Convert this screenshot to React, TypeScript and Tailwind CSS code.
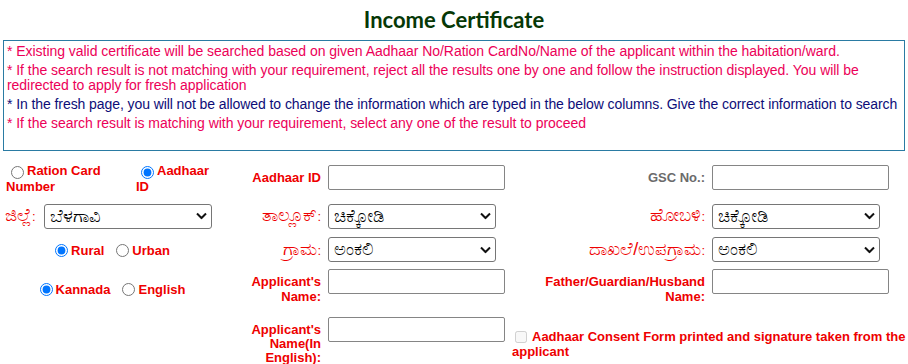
import React from 'react';

const Chevron = () => (
  <svg className="absolute right-[5px] top-1/2 -translate-y-1/2 pointer-events-none" width="11" height="7" viewBox="0 0 11 7" fill="none">
    <path d="M1 1L5.5 5.5L10 1" stroke="#111" strokeWidth="2" />
  </svg>
);

const Select = ({ value }: { value: string }) => (
  <div className="relative w-[168px] h-[25px]">
    <select className="appearance-none w-full h-full border border-[#767676] rounded-[3px] bg-white pl-[5px] text-[18px] leading-[23px] text-black" defaultValue={value}>
      <option value={value}>{value}</option>
    </select>
    <Chevron />
  </div>
);

const TextBox = ({ className = '' }: { className?: string }) => (
  <input type="text" className={`w-[177px] h-[25px] border border-[#858585] rounded-[2px] bg-white ${className}`} />
);

const labelB = 'w-[82px] shrink-0 text-right text-[#ee0000] font-bold text-[13px] leading-[15px] pr-[1px]';
const labelD = 'w-[198px] shrink-0 text-right text-[#ee0000] font-bold text-[13px] leading-[15px] pl-[15px] pr-[3px]';
const knLabel = 'text-[18px] leading-[22px] text-[#ee0000]';

export default function App() {
  return (
    <div className="w-[908px] h-[364px] overflow-hidden bg-white font-['Liberation_Sans',Arial,'Noto_Sans',sans-serif]">
      <div className="h-[40px] flex items-center justify-center">
        <h1 className="font-['Lato',sans-serif] font-bold text-[22px] leading-[26px] text-[#063806]">Income Certificate</h1>
      </div>

      {/* instructions */}
      <div className="mx-[3px] w-[902px] h-[111px] border border-[#2a7ba3] pl-[3px] pt-[3px] text-[14px] tracking-[-0.04px] leading-[15px] flex flex-col gap-[4px]">
        <p className="text-[#ec0058]">* Existing valid certificate will be searched based on given Aadhaar No/Ration CardNo/Name of the applicant within the habitation/ward.</p>
        <p className="text-[#ec0058]">* If the search result is not matching with your requirement, reject all the results one by one and follow the instruction displayed. You will be redirected to apply for fresh application</p>
        <p className="text-[#0d0d78] tracking-[-0.08px]">* In the fresh page, you will not be allowed to change the information which are typed in the below columns. Give the correct information to search</p>
        <p className="text-[#ec0058]">* If the search result is matching with your requirement, select any one of the result to proceed</p>
      </div>

      <div className="pt-[7px] text-[13px] leading-[15px]">
        {/* row 1 */}
        <div className="h-[38px] flex items-center">
          <div className="w-[240px] shrink-0 flex text-[#ee0000] font-bold mt-[3px]">
            <label className="w-[130px] ml-[6px]">
              <input type="radio" name="search" className="ml-[5px] mr-[3px] align-[-4px]" />Ration Card Number
            </label>
            <label className="w-[80px]">
              <input type="radio" name="search" defaultChecked className="ml-[5px] mr-[3px] align-[-4px] accent-[#0075ff]" />Aadhaar ID
            </label>
          </div>
          <div className={labelB}>Aadhaar ID</div>
          <div className="w-[188px] shrink-0 pl-[6px]"><TextBox /></div>
          <div className={`${labelD} !text-[#6b6b6b]`}>GSC No.:</div>
          <div className="pl-[4px]"><TextBox /></div>
        </div>

        {/* row 2 */}
        <div className="h-[40px] flex items-center">
          <div className="w-[240px] shrink-0 flex items-center">
            <span className={`w-[44px] shrink-0 pl-[5px] whitespace-nowrap ${knLabel}`}>ಜಿಲ್ಲೆ<span className="text-[13px]">:</span></span>
            <Select value="ಬೆಳಗಾವಿ" />
          </div>
          <div className={`w-[82px] shrink-0 text-right pr-[1px] whitespace-nowrap ${knLabel}`}>ತಾಲ್ಲೂಕ್<span className="text-[13px]">:</span></div>
          <div className="w-[188px] shrink-0 pl-[6px]"><Select value="ಚಿಕ್ಕೋಡಿ" /></div>
          <div className={`w-[198px] shrink-0 text-right pr-[3px] ${knLabel}`}>ಹೋಬಳಿ<span className="text-[13px]">:</span></div>
          <div className="pl-[4px]"><Select value="ಚಿಕ್ಕೋಡಿ" /></div>
        </div>

        {/* row 3 */}
        <div className="h-[27px] flex items-center">
          <div className="w-[220px] shrink-0 mr-[20px] mt-[2px] flex justify-center gap-[7px] text-[#ee0000] font-bold">
            <label className="flex items-center">
              <input type="radio" name="area" defaultChecked className="ml-[5px] mr-[3px] accent-[#0075ff]" />Rural
            </label>
            <label className="flex items-center">
              <input type="radio" name="area" className="ml-[5px] mr-[3px]" />Urban
            </label>
          </div>
          <div className={`w-[82px] shrink-0 text-right pr-[1px] ${knLabel}`}>ಗ್ರಾಮ<span className="text-[13px]">:</span></div>
          <div className="w-[188px] shrink-0 pl-[6px]"><Select value="ಅಂಕಲಿ" /></div>
          <div className={`w-[198px] shrink-0 text-right pr-[3px] ${knLabel}`}>ದಾಖಲೆ/ಉಪಗ್ರಾಮ<span className="text-[13px]">:</span></div>
          <div className="pl-[4px]"><Select value="ಅಂಕಲಿ" /></div>
        </div>

        {/* row 4 */}
        <div className="h-[52px] flex items-center">
          <div className="w-[220px] shrink-0 mr-[20px] flex justify-center gap-[7px] text-[#ee0000] font-bold">
            <label className="flex items-center">
              <input type="radio" name="lang" defaultChecked className="ml-[5px] mr-[3px] accent-[#0075ff]" />Kannada
            </label>
            <label className="flex items-center">
              <input type="radio" name="lang" className="ml-[5px] mr-[3px]" />English
            </label>
          </div>
          <div className={labelB}>Applicant's Name:</div>
          <div className="w-[188px] shrink-0 pl-[6px] self-start mt-[6px]"><TextBox /></div>
          <div className={labelD}>Father/Guardian/Husband Name:</div>
          <div className="pl-[4px] self-start mt-[6px]"><TextBox /></div>
        </div>

        {/* row 5 */}
        <div className="h-[58px] flex items-center">
          <div className="w-[240px] shrink-0" />
          <div className={`${labelB} !leading-[14px]`}>Applicant's Name(In English):</div>
          <div className="w-[188px] shrink-0 pl-[6px] self-start mt-[2px]"><TextBox /></div>
          <label className="w-[398px] pl-[2px] text-[#ee0000] font-bold">
            <input type="checkbox" disabled className="w-[12px] h-[12px] ml-[3px] mr-[5px] align-[-2px]" />Aadhaar Consent Form printed and signature taken from the applicant
          </label>
        </div>
      </div>
    </div>
  );
}
